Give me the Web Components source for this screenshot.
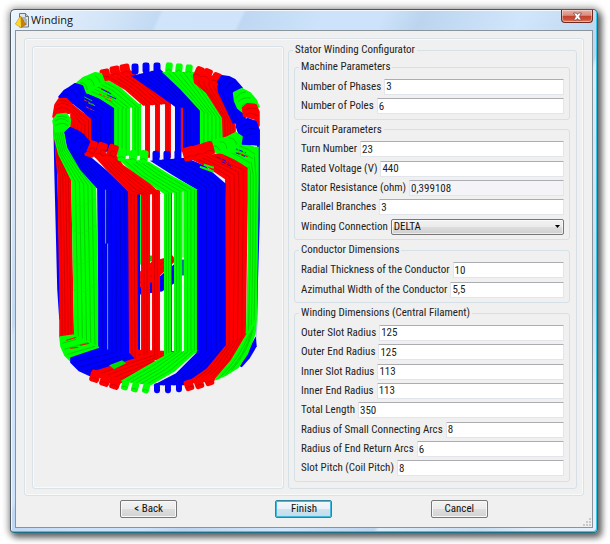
<!DOCTYPE html>
<html lang="en">
<head>
<meta charset="utf-8">
<title>Winding</title>
<style>
  html, body { height: 100%; }
  body {
    margin: 0; padding: 9px 12px 11px 10px; box-sizing: border-box; background: #fff; overflow: hidden;
    font: 11px/12px "Roboto Condensed", Roboto, sans-serif; color: #222;
  }
</style>
</head>
<body>
<winding-window caption="Winding">
  <dialog-page>
    <stator-view></stator-view>
    <param-group class="outer" caption="Stator Winding Configurator">
      <param-group rows="2" caption="Machine Parameters">
        <param-field label="Number of Phases" value="3"></param-field>
        <param-field label="Number of Poles" value="6"></param-field>
      </param-group>
      <param-group rows="5" caption="Circuit Parameters">
        <param-field label="Turn Number" value="23"></param-field>
        <param-field label="Rated Voltage (V)" value="440"></param-field>
        <param-field label="Stator Resistance (ohm)" value="0,399108" readonly></param-field>
        <param-field label="Parallel Branches" value="3"></param-field>
        <param-choice label="Winding Connection" value="DELTA"></param-choice>
      </param-group>
      <param-group rows="2" caption="Conductor Dimensions">
        <param-field label="Radial Thickness of the Conductor" value="10"></param-field>
        <param-field label="Azimuthal Width of the Conductor" value="5,5"></param-field>
      </param-group>
      <param-group rows="8" caption="Winding Dimensions (Central Filament)">
        <param-field label="Outer Slot Radius" value="125"></param-field>
        <param-field label="Outer End Radius" value="125"></param-field>
        <param-field label="Inner Slot Radius" value="113"></param-field>
        <param-field label="Inner End Radius" value="113"></param-field>
        <param-field label="Total Length" value="350"></param-field>
        <param-field label="Radius of Small Connecting Arcs" value="8"></param-field>
        <param-field label="Radius of End Return Arcs" value="6"></param-field>
        <param-field label="Slot Pitch (Coil Pitch)" value="8"></param-field>
      </param-group>
    </param-group>
  </dialog-page>
  <push-button slot="actions">&lt; Back</push-button>
  <push-button slot="actions" default>Finish</push-button>
  <push-button slot="actions">Cancel</push-button>
</winding-window>

<script>
class WindingWindow extends HTMLElement {
  constructor() {
    super();
    this.attachShadow({ mode: "open" }).innerHTML = `
    <style>
      :host { display: flex; flex-direction: column; height: 100%; box-sizing: border-box;
        border: 1px solid #505860; border-right-color: #1c6f86; border-bottom-color: #1c6f86; border-radius: 5px 5px 4px 4px;
        padding: 0 4px 4px; background:
          linear-gradient(115deg, #eaf4fd 0, #d3e5f8 12%, #c3daf4 18%, #d0e4fa 18.5%, #cfe4fb 28%, #bfd7f2 28.5%, #cde3fb 38%, #cde3fb 45%, #bcd4ee 50%, #d0e6fc 62%, #bdd5ee 73%, #dcecfa 73.5%, #c9def2 86%, #e2eefa 92%);
        box-shadow: inset -1px -1px 0 #35c5e8, inset 1px 1px 0 #f2f8fd, 0 0 7px 2px rgba(0,0,0,.3), 3px 4px 6px 1px rgba(0,0,0,.5); }
      header { display: flex; align-items: center; height: 20px; flex: none; gap: 2px; }
      header > svg { width: 14px; height: 15px; }
      h1 { flex: 1; margin: 0; font: 11px/16px "Open Sans", "Noto Sans", sans-serif; color: #111; }
      .close { align-self: flex-start; width: 32px; height: 13px; padding: 0; display: grid; place-items: center;
        border: 1px solid #6b2a22; border-top: 0; border-radius: 0 0 4px 4px;
        background: linear-gradient(#e9b0a5 0, #d98b7c 45%, #c2402a 50%, #d0523a 80%, #e58a70); box-shadow: inset 0 0 0 1px rgba(255,255,255,.4); }
      .close svg { width: 11px; height: 9px; }
      main { flex: 1; min-height: 0; display: flex; flex-direction: column; background: #f0f0f0;
        border: 1px solid #8a949c; padding: 7px 8px 9px; position: relative; }
      .page { flex: 1; min-height: 0; display: flex; }
      footer { display: grid; grid-template-columns: repeat(3, 1fr); justify-items: center; padding: 4px 47px 0; }
      .grip { position: absolute; right: 1px; bottom: 1px; width: 8px; height: 8px; }
    </style>
    <header>
      <svg viewBox="0 0 14 15" aria-hidden="true">
        <path d="M4.500.5h6l3 3v10.500h-9z" fill="#dfe5e8" stroke="#6c767c"/>
        <path d="M10.500.5v3h3" fill="#c4cdd2" stroke="#6c767c"/>
        <path d="M7 5h4M8 7h4M10 9h2M10 11h2" stroke="#6c8796"/>
        <path d="M5.500 3 11 11.500 6 14.500.5 11z" fill="#c98008" stroke="#8e5a06" stroke-width=".5"/>
        <path d="M5.500 3 6 14.500.5 11z" fill="#ffd92a"/>
      </svg>
      <h1></h1>
      <button class="close" aria-label="Close"><svg viewBox="0 0 11 9"><path d="M1.500 1h3l1 1.500 1-1.500h3L7.300 4.500 9.500 8h-3l-1-1.500-1 1.500h-3l2.200-3.500z" fill="#fff" stroke="#7b4a48" stroke-width=".8"/></svg></button>
    </header>
    <main>
      <div class="page"><slot></slot></div>
      <footer><slot name="actions"></slot></footer>
      <svg class="grip" viewBox="0 0 8 8" aria-hidden="true"><path d="M6 0h2v2H6zM3 3h2v2H3zM6 3h2v2H6zM0 6h2v2H0zM3 6h2v2H3zM6 6h2v2H6z" fill="#c9c9c9"/></svg>
    </main>`;
    this.shadowRoot.querySelector("h1").textContent = this.getAttribute("caption");
  }
}

class DialogPage extends HTMLElement {
  constructor() {
    super();
    this.attachShadow({ mode: "open" }).innerHTML = `
    <style>
      :host { flex: 1; min-width: 0; box-sizing: border-box; display: grid; grid-template-columns: minmax(0, 252fr) minmax(0, 289fr);
        grid-template-rows: minmax(0, 1fr); gap: 4px; padding: 5px 6px 6px 7px; border: 1px solid #d8e2e8; border-radius: 3px;
        box-shadow: inset 0 0 0 1px #f8fafa; }
    </style><slot></slot>`;
  }
}

class ParamGroup extends HTMLElement {
  constructor() {
    super();
    this.attachShadow({ mode: "open" }).innerHTML = `
    <style>
      :host { display: flex; min-width: 0; min-height: 0; }
      fieldset { flex: 1; min-width: 0; min-height: 0; box-sizing: border-box; margin: 0; padding: 4px 5px 3px 6px; border: 1px solid #d5e0e7; border-radius: 3px; }
      legend { height: 12px; padding: 0 2px; margin-left: -2px; white-space: nowrap; }
      .rows { display: flex; flex-direction: column; height: 100%; }
      :host(.outer) fieldset { padding: 5px 6px 6px 5px; }
      :host(.outer) legend { margin-left: -1px; }
      :host(.outer) .rows { gap: 4px; }
    </style>
    <fieldset><legend></legend><div class="rows"><slot></slot></div></fieldset>`;
    this.shadowRoot.querySelector("legend").textContent = this.getAttribute("caption");
    if (this.hasAttribute("rows")) this.style.flex = this.getAttribute("rows") + " 0 auto";
  }
}

class ParamField extends HTMLElement {
  constructor() {
    super();
    this.attachShadow({ mode: "open" }).innerHTML = `
    <style>
      :host { display: flex; flex: 1 0 19px; align-items: center; gap: 3px; }
      label { white-space: nowrap; }
      input { flex: 1; min-width: 0; height: 16px; box-sizing: border-box; margin: 0; padding: 0 1px; font: inherit; color: inherit;
        background: #fff; border: 1px solid #e2e6ec; border-top-color: #abadb3; border-radius: 1px; outline: 0; }
      input[readonly] { background: #f4f4f8; }
    </style><label for="f"></label><input id="f" type="text">`;
    this.shadowRoot.querySelector("label").textContent = this.getAttribute("label");
    const input = this.shadowRoot.querySelector("input");
    input.setAttribute("value", this.getAttribute("value"));
    input.readOnly = this.hasAttribute("readonly");
  }
}

class ParamChoice extends HTMLElement {
  constructor() {
    super();
    this.attachShadow({ mode: "open" }).innerHTML = `
    <style>
      :host { display: flex; flex: 1 0 19px; align-items: center; gap: 3px; }
      label { white-space: nowrap; }
      .box { flex: 1; min-width: 0; display: grid; align-items: center; }
      .box > * { grid-area: 1 / 1; }
      select { appearance: none; width: 100%; height: 16px; box-sizing: border-box; margin: 0; padding: 0 2px; font: inherit; line-height: 14px; color: #111;
        border: 1px solid #777; border-radius: 2px; background: linear-gradient(#f2f2f2, #ebebeb 48%, #dddddd 52%, #cfcfcf); box-shadow: inset 0 0 0 1px rgba(255,255,255,.6); }
      svg { justify-self: end; width: 5px; height: 3px; margin-right: 4px; pointer-events: none; }
    </style><label for="c"></label>
    <div class="box"><select id="c"><option></option></select><svg viewBox="0 0 5 3"><path d="M0 0h5L2.500 3z"/></svg></div>`;
    this.shadowRoot.querySelector("label").textContent = this.getAttribute("label");
    this.shadowRoot.querySelector("option").textContent = this.getAttribute("value");
  }
}

class PushButton extends HTMLElement {
  constructor() {
    super();
    this.attachShadow({ mode: "open" }).innerHTML = `
    <style>
      :host { display: block; width: 57px; }
      button { display: block; width: 100%; height: 18px; padding: 0; font: inherit; line-height: 14px; color: #111; border: 1px solid #777; border-radius: 2px;
        background: linear-gradient(#f3f3f3, #ebebeb 48%, #dddddd 52%, #d2d2d2); box-shadow: inset 0 0 0 1px #f8f8f8; }
      :host([default]) button { border-color: #32839e; box-shadow: inset 0 0 0 1px #3fb9e0;
        background: linear-gradient(#f2f7fa, #e8f2f8 48%, #cfe2ee 52%, #c4dcea); }
    </style><button type="button"><slot></slot></button>`;
  }
}

/* Three-phase stator winding: each band is a bundle of parallel conductors. */
const TONE = {
  r: ["#f00", "#c80000"], g: ["#0f0", "#00c800"], b: ["#00f", "#0000c0"]
};
const pts = a => a.map(p => p.join(",")).join(" ");
function band(c, a, b, n) {
  let s = `<polygon points="${pts(a.concat(b.slice().reverse()))}" fill="${TONE[c][0]}"/>`;
  for (let i = 1; i < n; i++) {
    const line = a.map((p, k) => [p[0] + (b[k][0] - p[0]) * i / n, p[1] + (b[k][1] - p[1]) * i / n]);
    s += `<polyline points="${pts(line)}" fill="none" stroke="${TONE[c][1]}" stroke-width=".8"/>`;
  }
  return s;
}
function bar(c, x1, x2, y1, y2, n = 2, dx = 0) {
  return band(c, [[x1, y1], [x1 + dx, y2]], [[x2, y1], [x2 + dx, y2]], n);
}
/* end loops: stubby rounded arcs following the rim */
function loops(c, list, w, h, angle = 0) {
  return list.map(([x, y]) => `<g transform="translate(${x} ${y}) rotate(${angle})">
    <rect x="${-w / 2}" y="${-h / 2}" width="${w}" height="${h}" rx="2.500" fill="${TONE[c][0]}"/>
    <path d="M${-w / 2 + 1} ${h / 4}Q0 ${h / 4 - 3} ${w / 2 - 1} ${h / 4}" fill="none" stroke="${TONE[c][1]}" stroke-width=".8"/></g>`).join("");
}
/* merged run of loops seen edge-on, with its ribs */
function shell(c, outline, ribs) {
  return `<polygon points="${pts(outline)}" fill="${TONE[c][0]}" stroke="${TONE[c][0]}" stroke-width="2" stroke-linejoin="round"/>
    <path d="${ribs}" fill="none" stroke="${TONE[c][1]}" stroke-width=".9"/>`;
}
const rect = (x, y, w, h, f) => `<rect x="${x}" y="${y}" width="${w}" height="${h}" fill="${f}"/>`;

function stator() {
  let s = "";
  /* bore seen between the back conductors */
  s += rect(113, 104, 88, 51, "#f8f8f8") + rect(136, 190, 50, 165, "#f8f8f8");
  /* back wall verticals */
  s += bar("r", 70, 92, 114, 145, 6) + bar("b", 91, 115, 104, 152, 5);
  s += bar("g", 114, 130, 104, 156, 4) + bar("g", 132, 141, 104, 156, 3);
  s += bar("r", 145, 150, 100, 158) + bar("r", 155, 160, 100, 158) + bar("r", 165, 171, 100, 158);
  s += bar("b", 175, 181, 100, 154) + bar("r", 181, 183, 100, 152, 1) + bar("b", 183, 201, 100, 154, 5);
  s += bar("g", 200, 224, 106, 148, 6);
  /* back slopes */
  s += `<polygon points="232,86 240,88 246,104 246,124 236,128" fill="#00f"/>`;
  s += band("r", [[70, 112], [74, 120], [80, 128]], [[72, 104], [82, 112], [91, 118]], 4);
  s += band("b", [[71, 103], [80, 110], [92, 120]], [[84, 92], [99, 98], [115, 108]], 6);
  s += band("g", [[84, 92], [100, 99], [115, 109]], [[104, 78], [120, 87], [142, 107]], 6);
  s += band("r", [[101, 76], [125, 90], [143, 106]], [[130, 70], [148, 84], [171, 104]], 6);
  s += band("b", [[131, 76], [150, 89], [175, 107]], [[160, 69], [178, 85], [201, 110]], 7);
  s += band("g", [[162, 72], [180, 89], [201, 112]], [[194, 72], [206, 92], [224, 120]], 6);
  s += band("r", [[193, 74], [194, 83], [206, 93], [222, 118], [223, 142]], [[221, 76], [219, 88], [232, 115], [236, 127], [236, 135]], 5);
  s += band("b", [[217, 82], [218, 92], [233, 124]], [[236, 90], [234, 102], [242, 123]], 3);
  s += `<path d="M97 87l12 5M99 94l12 5M105 99l8 3M84 100l10 5M86 107l8 4" stroke="#f03000" stroke-dasharray="3 1"/><path d="M101 89l10 5M107 95l9 4" stroke="#00f"/><path d="M84 97l8 4M88 103l7 3" stroke="#00c800"/>`;
  /* top rim loops */
  s += loops("r", [[105, 75], [115, 72], [125, 70]], 10, 12, -10);
  s += loops("b", [[135, 69], [146, 68], [157, 68]], 7, 11);
  s += loops("g", [[169, 68], [179, 69], [189, 70]], 7, 11, 6);
  s += loops("r", [[199, 73], [207, 75], [216, 79]], 9, 13, 24);
  s += shell("b", [[218, 82], [222, 76], [229, 77], [235, 80], [242, 88], [236, 91], [233, 99], [225, 92]], "M220 86q3-7 9-8M226 89q2-7 9-7M232 93q2-6 7-7");
  s += shell("g", [[234, 93], [242, 89], [250, 93], [256, 100], [259, 107], [245, 105], [243, 112], [238, 108], [235, 101]], "M236 98q4-6 10-6M238 102q5-5 13-4M242 106q5-4 13-2");
  s += shell("r", [[243, 108], [248, 104], [256, 105], [259, 112], [259, 126], [255, 119], [244, 116]], "M245 110q5-3 12-1M246 114q6-2 12 2");
  s += shell("g", [[77, 83], [83, 78], [88, 76], [95, 73], [101, 74], [104, 82], [96, 87], [87, 93], [82, 88]], "M80 83q6-1 7 7M87 79q6 0 7 7M95 76q4 2 5 7");
  s += shell("b", [[59, 97], [64, 91], [69, 88], [75, 84], [82, 86], [85, 94], [76, 103], [71, 103], [65, 97]], "M62 94q8 0 10 7M68 90q7 0 9 8M75 87q5 1 6 8");
  s += shell("r", [[53, 117], [55, 105], [59, 99], [66, 99], [71, 104], [71, 113], [56, 114]], "M55 110q8-5 15 1M57 105q7-4 13 2M60 101q6-1 9 3");

  /* outer front wall */
  s += band("b", [[53, 118], [54, 170], [57, 290], [59, 320]], [[55, 118], [57, 170], [60, 290], [61, 320]], 1);
  s += band("r", [[54, 130], [55, 155], [57, 175], [59, 290], [59, 338]], [[54, 132], [60, 155], [71, 180], [73, 290], [74, 342]], 5);
  s += band("b", [[257, 130], [258, 200], [257, 290], [257, 345]], [[260, 130], [260, 220], [258, 290], [257, 345]], 1);
  s += band("g", [[238, 146], [248, 170], [248, 250], [246, 337]], [[259, 147], [259, 180], [258, 260], [257, 320]], 4);
  s += band("r", [[205, 160], [225, 178], [226, 200], [225, 350]], [[225, 150], [248, 168], [248, 200], [246, 338]], 5);

  /* crossing bars inside the bore */
  s += band("r", [[140, 272], [152, 262], [173, 256]], [[140, 289], [155, 281], [175, 262]], 3);
  s += band("b", [[140, 288], [155, 281], [175, 264]], [[140, 295], [162, 292], [180, 280]], 3);
  s += rect(150, 256, 4, 6, "#00c800") + rect(180, 260, 4, 16, "#087890");
  s += bar("b", 137, 140, 190, 355, 1) + rect(140, 195, 2, 70, "#0f0");
  s += band("r", [[130, 350], [150, 351], [176, 352]], [[130, 368], [150, 362], [176, 357]], 3);

  /* front verticals and their slopes up to the rim */
  s += band("g", [[53, 118], [53, 136], [58, 155], [71, 181], [73, 290], [74, 344]], [[67, 114], [64, 132], [67, 148], [96, 188], [98, 290], [99, 352]], 6);
  s += band("b", [[64, 132], [67, 148], [80, 170], [97, 189], [98, 290], [98, 353]], [[82, 136], [88, 155], [107, 171], [129, 192], [130, 290], [130, 356]], 7);
  s += rect(105, 190, 1, 54, "#0f0") + rect(107, 244, 1, 108, "#0f0");
  s += bar("r", 128, 137, 192, 360, 3, 1) + bar("r", 141, 150, 192, 360, 3) + bar("r", 152, 160, 190, 358, 3);
  s += bar("g", 164, 171, 190, 358, 3) + rect(171, 190, 1, 165, "#f00") + bar("g", 174, 182, 190, 357, 3);
  s += rect(182, 190, 2, 68, "#7de87d") + bar("g", 184, 198, 188, 354, 4);
  s += bar("b", 197, 226, 184, 354, 6);
  s += band("b", [[150, 161], [172, 175], [197, 190]], [[186, 158], [205, 166], [226, 184]], 6);
  s += band("g", [[117, 158], [135, 175], [164, 194]], [[149, 162], [170, 175], [198, 190]], 6);
  s += band("r", [[88, 150], [107, 171], [129, 193], [140, 195]], [[117, 156], [123, 165], [150, 184], [161, 194]], 6);
  s += band("r", [[190, 159], [208, 168], [226, 180]], [[216, 154], [232, 162], [248, 168]], 5);
  s += band("g", [[211, 149], [235, 160], [248, 168]], [[242, 142], [252, 146], [258, 150]], 4);
  s += `<path d="M217 157l13 6M222 162l10 5M234 148l12 5M236 153l10 4" stroke="#00f" stroke-dasharray="4 2"/><path d="M200 167l14 5M204 165l10 3" stroke="#0f0" stroke-width="2"/><path d="M238 153l10 4M226 161l10 5" stroke="#f00"/>`;
  /* front rim loops */
  s += shell("b", [[237, 127], [242, 121], [248, 119], [256, 122], [259, 130], [259, 145], [243, 144], [240, 136]], "M239 129q6-6 12-5M242 133q6-6 13-4M245 138q6-6 12-4");
  s += shell("g", [[208, 145], [217, 140], [226, 138], [236, 133], [242, 137], [241, 143], [232, 152], [217, 153]], "M211 147q6-3 9 4M220 142q6-1 7 7M229 138q6 0 8 7");
  s += loops("r", [[189, 154], [198, 152], [208, 149]], 12, 14, -15);
  s += loops("b", [[156, 157], [167, 157], [178, 156]], 7, 12);
  s += loops("g", [[122, 155], [133, 157], [144, 157]], 8, 13, 8);
  s += loops("r", [[91, 149], [101, 151], [112, 153]], 10, 17, 18);
  s += shell("b", [[65, 131], [70, 128], [77, 131], [83, 135], [89, 142], [85, 152], [76, 150], [68, 146]], "M67 138q4-7 11-4M73 144q2-8 10-6M80 149q1-7 8-6");
  s += shell("g", [[53, 121], [57, 115], [66, 114], [70, 120], [69, 126], [64, 131], [55, 132]], "M55 121q7-5 13 1M55 126q7-5 13 0M57 117q6-2 10 1");
  s += `<g fill="none" stroke="#c80000" stroke-width=".8"><circle cx="92" cy="151" r="3"/><circle cx="103" cy="153" r="3"/><circle cx="113" cy="154" r="3"/></g>`;

  /* surface joints along the conductors */
  s += `<g fill="none" stroke="#00f000" stroke-width=".8">` + [204, 231, 262, 290, 317].map(y => `<path d="M73 ${y}l7 3M81 ${y + 3}l7-3M89 ${y - 2}l7-3M185 ${y}h10"/>`).join("") + `</g>`;

  /* bottom end turns */
  s += `<polygon points="240,367 250,348 256,337 257,347 250,359 242,368" fill="#00f"/>`;
  s += shell("g", [[60, 338], [74, 336], [98, 348], [86, 354], [71, 362], [65, 356], [61, 347]], "M62 344l14-4M64 350l24-7M67 355l28-8M70 359l22-8");
  s += `<path d="M66 341l10-3M80 346l9-2M70 349l8-1" stroke="#f00"/>`;
  s += shell("b", [[71, 359], [98, 350], [128, 354], [134, 360], [112, 370], [90, 376], [79, 371], [71, 363]], "M74 363l40-10M79 368l43-12M84 372l44-14");
  s += band("r", [[90, 373], [122, 363], [154, 353]], [[115, 387], [133, 378], [155, 368]], 5);
  s += `<polygon points="109,366 122,361 126,364 114,370" fill="#00e000"/>`;
  s += band("g", [[120, 382], [146, 367], [170, 353]], [[151, 386], [175, 372], [198, 351]], 6);
  s += band("b", [[153, 386], [176, 374], [197, 353]], [[184, 386], [207, 371], [226, 350]], 6);
  s += band("r", [[184, 385], [207, 369], [225, 347]], [[214, 382], [232, 362], [247, 334]], 5);
  s += shell("g", [[216, 380], [232, 361], [247, 336], [256, 320], [255, 334], [247, 355], [238, 368], [227, 375]], "M221 377q18-17 29-43M226 375q19-18 26-44M232 371q17-20 22-44");
  s += loops("r", [[95, 377], [105, 381], [115, 384]], 10, 12, 18);
  s += loops("g", [[125, 386], [135, 388], [146, 389]], 7, 10, 15);
  s += loops("b", [[157, 389], [168, 389], [179, 388]], 6, 10);
  s += loops("r", [[189, 386], [199, 384], [209, 381]], 9, 11, -20);
  return s;
}

class StatorView extends HTMLElement {
  constructor() {
    super();
    this.attachShadow({ mode: "open" }).innerHTML = `
    <style>
      :host { display: block; min-width: 0; min-height: 0; box-sizing: border-box; margin-top: 2px; border: 1px solid #d8e2e8; border-radius: 3px;
        box-shadow: inset 0 0 0 1px #f8fafa; overflow: hidden; }
      svg { display: block; width: 100%; height: 100%; }
    </style>
    <svg viewBox="33 47 250 442" preserveAspectRatio="xMidYMin meet" role="img" aria-label="Stator winding model">${stator()}</svg>`;
  }
}

customElements.define("push-button", PushButton);
customElements.define("param-field", ParamField);
customElements.define("param-choice", ParamChoice);
customElements.define("param-group", ParamGroup);
customElements.define("stator-view", StatorView);
customElements.define("dialog-page", DialogPage);
customElements.define("winding-window", WindingWindow);
</script>
</body>
</html>
